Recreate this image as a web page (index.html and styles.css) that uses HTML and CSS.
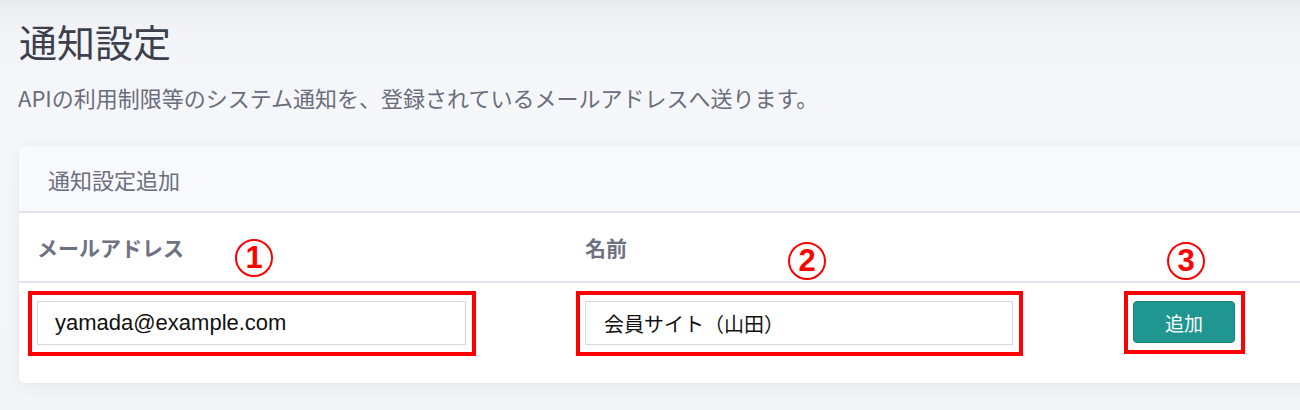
FILE: index.html
```html
<!DOCTYPE html>
<html lang="ja">
<head>
<meta charset="utf-8">
<title>通知設定</title>
<link rel="stylesheet" href="styles.css">
</head>
<body>
<div class="page">
  <h1 class="title">通知設定</h1>
  <p class="lead">APIの利用制限等のシステム通知を、登録されているメールアドレスへ送ります。</p>

  <section class="card">
    <div class="card-head">通知設定追加</div>
    <div class="grid">
      <div class="th">メールアドレス<span class="num n1">1</span></div>
      <div class="th">名前<span class="num n2">2</span></div>
      <div class="th"><span class="num n3">3</span></div>

      <div class="td"><div class="mark"><input class="field f1" type="text" value="yamada@example.com"></div></div>
      <div class="td"><div class="mark"><input class="field f2" type="text" value="会員サイト（山田）"></div></div>
      <div class="td"><div class="mark"><button class="btn" type="button">追加</button></div></div>
    </div>
  </section>
</div>
</body>
</html>
```

FILE: styles.css
```css
html {
  overflow: hidden;
}
body {
  margin: 0;
  background: linear-gradient(#e9eaed 0px, #f3f4f7 30px, #f6f7fa 120px, #f4f5f8 100%);
  font-family: "Noto Sans CJK JP", "Noto Sans", sans-serif;
  min-height: 410px;
}
.page {
  padding: 22px 0 0 18px;
}
.title {
  margin: 0;
  font-size: 38px;
  line-height: 38px;
  font-weight: 400;
  color: #3c3f4c;
  padding-left: 1px;
}
.lead {
  margin: 26px 0 0 0;
  font-size: 22px;
  line-height: 22px;
  color: #6a6d7b;
}
.card {
  margin: 38px 0 0 1px;
  width: 1330px;
  background: #ffffff;
  border-radius: 5px;
  box-shadow: 0 3px 18px rgba(40, 50, 90, 0.07), 0 0 1px rgba(40, 50, 90, 0.15);
  overflow: hidden;
  padding-bottom: 38px;
}
.card-head {
  background: #f8f9fc;
  height: 65px;
  padding-left: 29px;
  display: flex;
  align-items: center;
  font-size: 22px;
  color: #6c6f7c;
  border-bottom: 2px solid #e0e3ed;
}
.grid {
  display: grid;
  grid-template-columns: 548px 548px 1fr;
}
.th {
  position: relative;
  height: 68px;
  padding: 0 18px;
  display: flex;
  align-items: center;
  font-size: 21px;
  font-weight: 700;
  color: #6e7182;
  border-bottom: 2px solid #e1e4ee;
}
.td {
  padding: 18px 18px 0 18px;
}
.num {
  position: absolute;
  box-sizing: border-box;
  width: 38px;
  height: 38px;
  border: 2px solid #ff0000;
  border-radius: 50%;
  color: #ff0000;
  font-family: "Liberation Sans", Arial, sans-serif;
  font-weight: 700;
  font-size: 31px;
  line-height: 34px;
  text-align: center;
}
.n1 { left: 216px; top: 26px; }
.n2 { left: 221px; top: 29px; }
.n3 { left: 52px; top: 29px; }
.mark {
  position: relative;
  display: inline-block;
  vertical-align: top;
}
.mark::after {
  content: "";
  position: absolute;
  top: -10px;
  left: -9px;
  right: -10px;
  bottom: -11px;
  border: 4px solid #ff0000;
  pointer-events: none;
}
.field {
  box-sizing: border-box;
  display: block;
  height: 44px;
  border: 1px solid #d8d8d8;
  background: #ffffff;
  padding: 0 17px;
  font-size: 20px;
  color: #111111;
  font-family: "Noto Sans CJK JP", "Noto Sans", sans-serif;
  outline: none;
}
.f1 { width: 429px; font-family: "Liberation Sans", Arial, sans-serif; font-size: 22px; }
.f2 { width: 428px; padding-left: 18px; }
.btn {
  box-sizing: border-box;
  display: block;
  width: 102px;
  height: 42px;
  border: 1px solid #1a847e;
  border-radius: 4px;
  background: #1f968f;
  color: #ffffff;
  font-family: "Noto Sans CJK JP", "Noto Sans", sans-serif;
  font-size: 19px;
  padding: 0;
}
```
